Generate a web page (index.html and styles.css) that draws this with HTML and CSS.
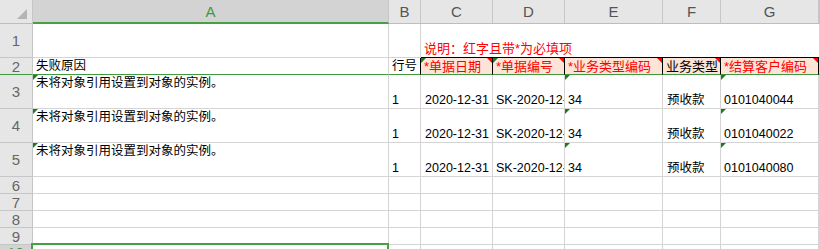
FILE: index.html
```html
<!DOCTYPE html>
<html>
<head>
    <title>导入失败明细</title>
    <link rel="stylesheet" href="styles.css">
</head>
<body>
    <div class="sheet">
        <!-- column headers -->
        <div class="cell hd corner"></div>
        <div class="cell hd col-sel">A</div>
        <div class="cell hd">B</div>
        <div class="cell hd">C</div>
        <div class="cell hd">D</div>
        <div class="cell hd">E</div>
        <div class="cell hd">F</div>
        <div class="cell hd">G</div>
        <div class="cell hd"></div>

        <!-- row 1 -->
        <div class="cell rh">1</div>
        <div class="cell"></div>
        <div class="cell"></div>
        <div class="cell note">说明：红字且带*为必填项</div>
        <div class="cell edge"></div>

        <!-- row 2 -->
        <div class="cell rh freeze">2</div>
        <div class="cell freeze">失败原因</div>
        <div class="cell freeze before-req">行号</div>
        <div class="cell freeze req red mark-g mark-r">*单据日期</div>
        <div class="cell freeze req red mark-g mark-r">*单据编号</div>
        <div class="cell freeze req red mark-r">*业务类型编码</div>
        <div class="cell freeze req mark-r">业务类型</div>
        <div class="cell freeze req red mark-r">*结算客户编码</div>
        <div class="cell freeze edge"></div>

        <!-- row 3 -->
        <div class="cell rh">3</div>
        <div class="cell top mark-g">未将对象引用设置到对象的实例。</div>
        <div class="cell">1</div>
        <div class="cell right">2020-12-31</div>
        <div class="cell">SK-2020-12-0001</div>
        <div class="cell mark-g">34</div>
        <div class="cell cjk">预收款</div>
        <div class="cell mark-g">0101040044</div>
        <div class="cell edge"></div>

        <!-- row 4 -->
        <div class="cell rh">4</div>
        <div class="cell top mark-g">未将对象引用设置到对象的实例。</div>
        <div class="cell">1</div>
        <div class="cell right">2020-12-31</div>
        <div class="cell">SK-2020-12-0002</div>
        <div class="cell mark-g">34</div>
        <div class="cell cjk">预收款</div>
        <div class="cell mark-g">0101040022</div>
        <div class="cell edge"></div>

        <!-- row 5 -->
        <div class="cell rh">5</div>
        <div class="cell top mark-g">未将对象引用设置到对象的实例。</div>
        <div class="cell">1</div>
        <div class="cell right">2020-12-31</div>
        <div class="cell">SK-2020-12-0003</div>
        <div class="cell mark-g">34</div>
        <div class="cell cjk">预收款</div>
        <div class="cell mark-g">0101040080</div>
        <div class="cell edge"></div>

        <!-- rows 6-9 empty -->
        <div class="cell rh">6</div>
        <div class="cell"></div><div class="cell"></div><div class="cell"></div><div class="cell"></div>
        <div class="cell"></div><div class="cell"></div><div class="cell"></div><div class="cell edge"></div>

        <div class="cell rh">7</div>
        <div class="cell"></div><div class="cell"></div><div class="cell"></div><div class="cell"></div>
        <div class="cell"></div><div class="cell"></div><div class="cell"></div><div class="cell edge"></div>

        <div class="cell rh">8</div>
        <div class="cell"></div><div class="cell"></div><div class="cell"></div><div class="cell"></div>
        <div class="cell"></div><div class="cell"></div><div class="cell"></div><div class="cell edge"></div>

        <div class="cell rh">9</div>
        <div class="cell"></div><div class="cell"></div><div class="cell"></div><div class="cell"></div>
        <div class="cell"></div><div class="cell"></div><div class="cell"></div><div class="cell edge"></div>

        <!-- row 10, selected cell -->
        <div class="cell rh row-sel">10</div>
        <div class="cell active"></div>
        <div class="cell"></div><div class="cell"></div><div class="cell"></div>
        <div class="cell"></div><div class="cell"></div><div class="cell"></div><div class="cell edge"></div>
    </div>
</body>
</html>
```

FILE: styles.css
```css
body {
    margin: 0;
    background: #fff;
    font-family: "Liberation Sans", "Noto Sans CJK SC", sans-serif;
    font-size: 12.5px;
    color: #000;
    overflow: hidden;
}
.sheet {
    display: grid;
    grid-template-columns: 33px 356px 32px 72px 72px 98px 58px 98px 1fr;
    grid-template-rows: 24px 34px 17px 34px 34px 34px 17px 17px 17px 17px 20px;
    width: 820px;
    height: 249px;
    overflow: hidden;
}
.cell {
    position: relative;
    box-sizing: border-box;
    border-right: 1px solid #d4d4d4;
    border-bottom: 1px solid #d4d4d4;
    padding: 0 2px 0 3px;
    display: flex;
    align-items: flex-end;
    line-height: 15px;
    white-space: nowrap;
    overflow: hidden;
}
.cell.edge {
    padding: 0;
}

/* headers */
.hd, .rh {
    background: #e6e6e6;
    border-right-color: #c6c6c6;
    border-bottom-color: #c6c6c6;
    justify-content: center;
    align-items: center;
    color: #555;
    font-size: 15px;
    padding: 0;
}
.hd {
    border-bottom-color: #bdbdbd;
}
.rh {
    color: #666;
}
.corner::after {
    content: "";
    position: absolute;
    right: 5px;
    bottom: 4px;
    border-bottom: 10px solid #b4b4b4;
    border-left: 10px solid transparent;
}
.col-sel {
    background: #d3d3d3;
    color: #3c9a3c;
    border-bottom: 2px solid #44a244;
}
.row-sel {
    background: #d3d3d3;
    color: #3c9a3c;
    align-items: flex-start;
    border-right: 2px solid #44a244;
}

/* row 1 merged note */
.note {
    grid-column: 4 / 9;
    border-right: none;
    border-bottom-color: #000;
    color: #f00;
    font-size: 13px;
    padding-bottom: 1px;
}

/* row 2 field names */
.freeze {
    border-bottom-color: #3f9a3f;
}
.rh.freeze {
    border-bottom-color: #3f9a3f;
}
.before-req {
    border-right-color: #000;
}
.req {
    background: #fce4d6;
    border-right-color: #000;
    font-size: 13px;
}
.red {
    color: #f00;
}

/* cells */
.top {
    align-items: flex-start;
    padding-top: 1px;
}
.right {
    justify-content: flex-end;
    padding-right: 3px;
}
.cjk {
    padding-left: 4px;
    padding-bottom: 0;
    margin-bottom: 0;
}

/* error / comment indicators */
.mark-g::before {
    content: "";
    position: absolute;
    top: 0;
    left: 0;
    border-top: 5px solid #1c7d1c;
    border-right: 5px solid transparent;
}
.mark-r::after {
    content: "";
    position: absolute;
    top: 0;
    right: 0;
    border-top: 5px solid #f00;
    border-left: 5px solid transparent;
}

.active {
    overflow: visible;
}
.active::after {
    content: "";
    position: absolute;
    top: -2px;
    left: -2px;
    right: -1px;
    height: 30px;
    border: 2px solid #44a244;
}
```
